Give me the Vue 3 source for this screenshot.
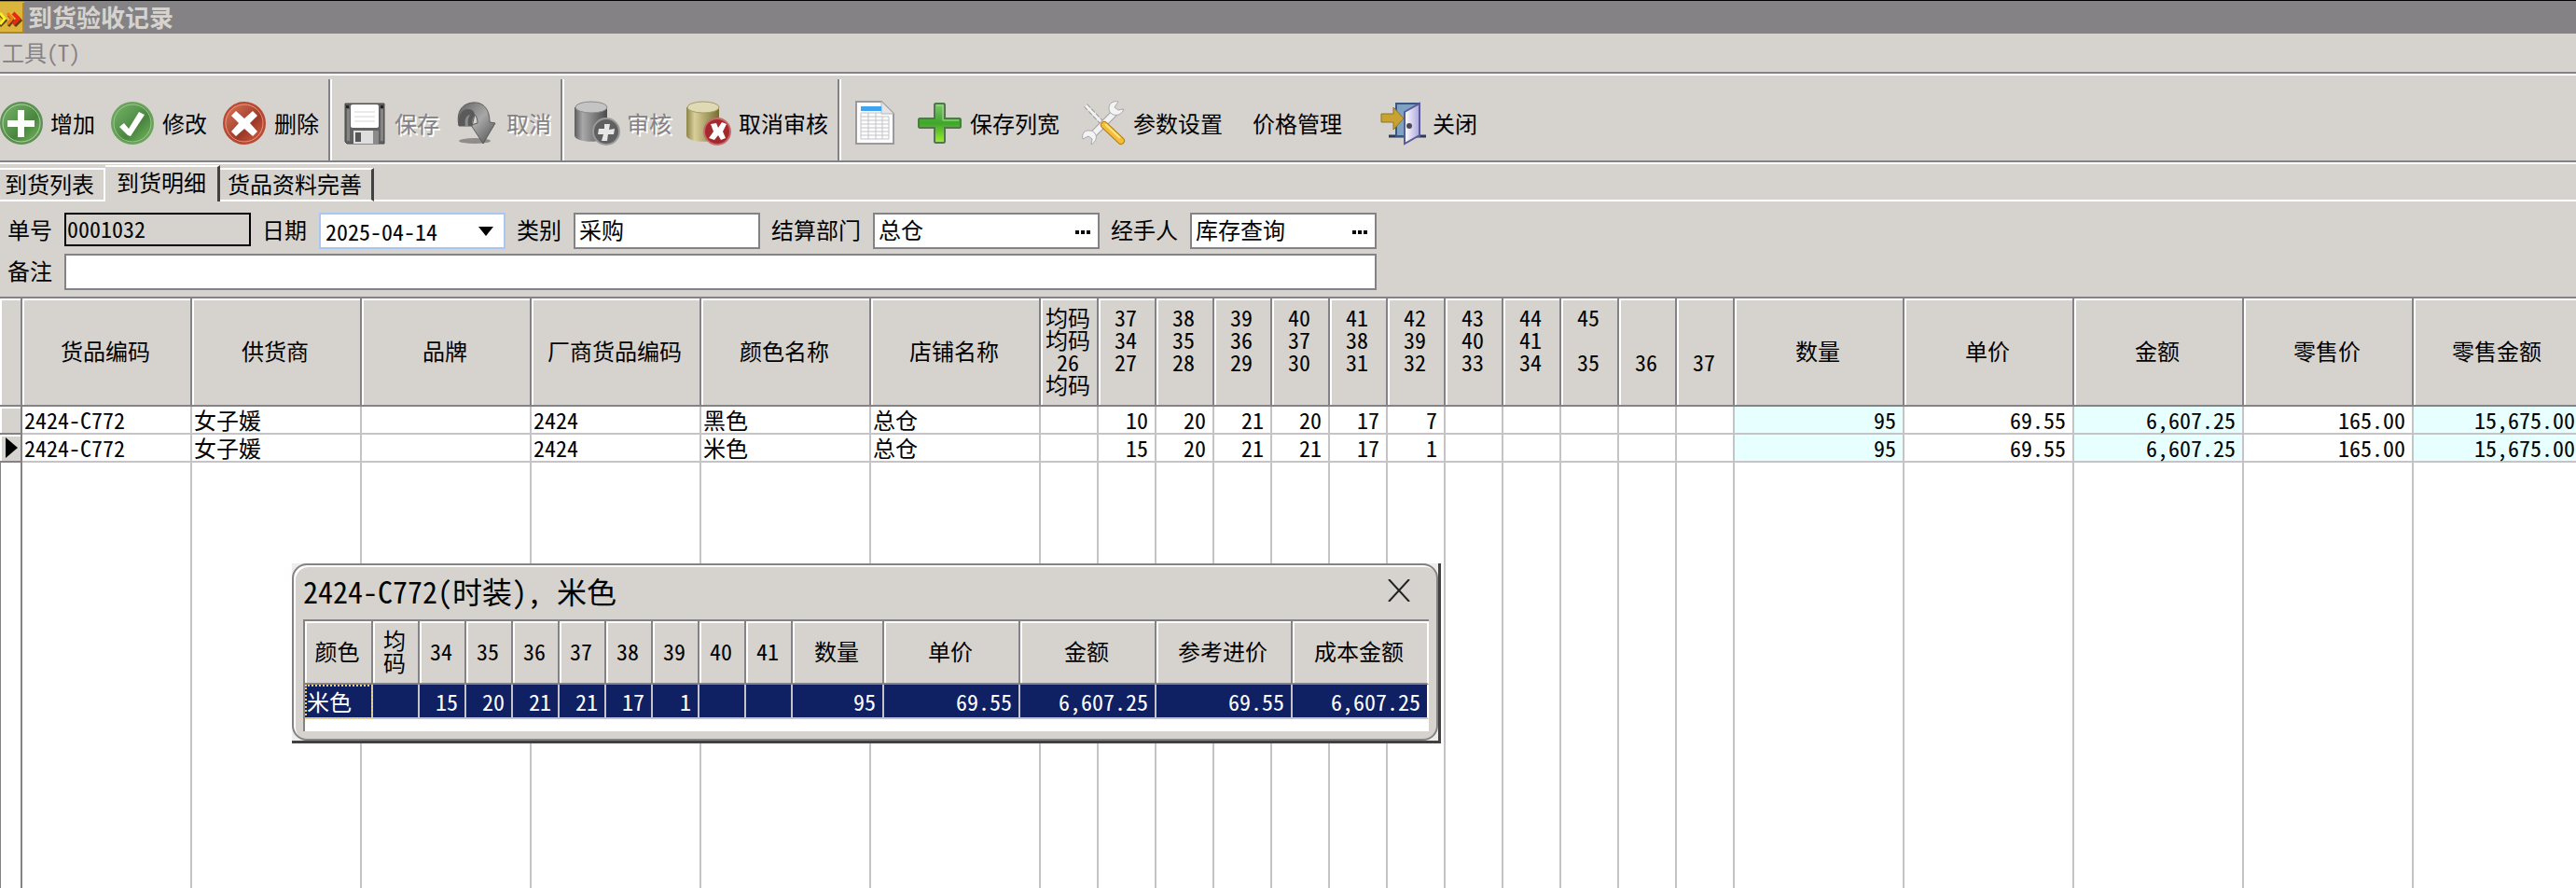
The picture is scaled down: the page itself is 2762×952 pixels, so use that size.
<script setup>
import { ref } from "vue";

const billNo = ref("0001032");
const billDate = ref("2025-04-14");
const category = ref("采购");
const department = ref("总仓");
const handler = ref("库存查询");
const remark = ref("");

const activeTab = ref("到货明细");
const tabs = ["到货列表", "到货明细", "货品资料完善"];

const showDetail = ref(true);
const currentRow = ref(1);

const textColumns = ["货品编码", "供货商", "品牌", "厂商货品编码", "颜色名称", "店铺名称"];

const sizeColumns = [
  ["均码", "均码", "26", "均码"],
  ["37", "34", "27", ""],
  ["38", "35", "28", ""],
  ["39", "36", "29", ""],
  ["40", "37", "30", ""],
  ["41", "38", "31", ""],
  ["42", "39", "32", ""],
  ["43", "40", "33", ""],
  ["44", "41", "34", ""],
  ["45", "", "35", ""],
  ["", "", "36", ""],
  ["", "", "37", ""],
];

const totalColumns = ["数量", "单价", "金额", "零售价", "零售金额"];
const tinted = ["数量", "金额", "零售金额"];

const rows = [
  {
    info: ["2424-C772", "女子媛", "", "2424", "黑色", "总仓"],
    sizes: ["", "10", "20", "21", "20", "17", "7", "", "", "", "", ""],
    totals: ["95", "69.55", "6,607.25", "165.00", "15,675.00"],
  },
  {
    info: ["2424-C772", "女子媛", "", "2424", "米色", "总仓"],
    sizes: ["", "15", "20", "21", "21", "17", "1", "", "", "", "", ""],
    totals: ["95", "69.55", "6,607.25", "165.00", "15,675.00"],
  },
];

const detailSizes = ["34", "35", "36", "37", "38", "39", "40", "41"];
const detailTotals = ["单价", "金额", "参考进价", "成本金额"];
const detailRow = ["", "15", "20", "21", "21", "17", "1", "", "", "95", "69.55", "6,607.25", "69.55", "6,607.25"];
</script>

<template>
  <div class="window">
    <svg class="defs" width="0" height="0" aria-hidden="true">
      <defs>
        <linearGradient id="green" x1="0" y1="0" x2="1" y2="1">
          <stop offset="0" stop-color="#79b86b" />
          <stop offset="0.6" stop-color="#4a8540" />
          <stop offset="1" stop-color="#7cc064" />
        </linearGradient>
        <linearGradient id="red" x1="0" y1="0" x2="1" y2="1">
          <stop offset="0" stop-color="#e07a5c" />
          <stop offset="0.6" stop-color="#9c3a28" />
          <stop offset="1" stop-color="#e0664a" />
        </linearGradient>
        <linearGradient id="steel" x1="0" y1="0" x2="1" y2="0">
          <stop offset="0" stop-color="#5c5c5c" />
          <stop offset="0.25" stop-color="#a9a9a9" />
          <stop offset="1" stop-color="#4a4a4a" />
        </linearGradient>
        <linearGradient id="brass" x1="0" y1="0" x2="1" y2="0">
          <stop offset="0" stop-color="#8c8348" />
          <stop offset="0.25" stop-color="#d8d09a" />
          <stop offset="1" stop-color="#756c30" />
        </linearGradient>
        <linearGradient id="lime" x1="0" y1="0" x2="0" y2="1">
          <stop offset="0" stop-color="#7cc86a" />
          <stop offset="0.5" stop-color="#3fa52c" />
          <stop offset="1" stop-color="#9cf02c" />
        </linearGradient>
        <linearGradient id="arrow" x1="0" y1="0" x2="1" y2="1">
          <stop offset="0" stop-color="#606060" />
          <stop offset="0.5" stop-color="#a8a8a8" />
          <stop offset="1" stop-color="#4c4c4c" />
        </linearGradient>
        <linearGradient id="door" x1="0" y1="0" x2="1" y2="0">
          <stop offset="0" stop-color="#ffffff" />
          <stop offset="1" stop-color="#a9a6dc" />
        </linearGradient>
      </defs>
    </svg>

    <header class="title-bar">
      <svg class="app-icon" viewBox="0 0 26 34" aria-hidden="true">
        <rect width="26" height="34" fill="#dcb53c" />
        <path d="M0 33h25V1" fill="none" stroke="#b3871c" stroke-width="2" />
        <path d="M0 14l6 6-6 6M9 14l5 6-5 6M16 14l6 6-6 6" fill="none" stroke="#5a400c" stroke-width="3" />
        <path d="M0 12l5 6-5 6" fill="none" stroke="#f8f020" stroke-width="3" />
        <path d="M8 12l5 6-5 6" fill="none" stroke="#f07818" stroke-width="3" />
        <path d="M14 12l6 6-6 6" fill="none" stroke="#e82810" stroke-width="4" />
      </svg>
      <h1>到货验收记录</h1>
    </header>

    <nav class="menu-bar">
      <button type="button" disabled>工具(T)</button>
    </nav>

    <div class="toolbar">
      <div class="tool-group first">
        <button type="button" class="tool">
          <svg viewBox="0 0 48 48" aria-hidden="true">
            <circle cx="25" cy="24" r="22" fill="url(#green)" stroke="#5f8f56" stroke-width="2" />
            <circle cx="25" cy="24" r="20" fill="none" stroke="#a8d49c" stroke-width="1" />
            <path d="M21 10h7v11h11v7H28v11h-7V28H10v-7h11z" fill="#fff" />
          </svg>
          <span>增加</span>
        </button>
        <button type="button" class="tool">
          <svg viewBox="0 0 48 48" aria-hidden="true">
            <circle cx="24" cy="24" r="22" fill="url(#green)" stroke="#6aa35c" stroke-width="2" />
            <circle cx="24" cy="24" r="20" fill="none" stroke="#98c98c" stroke-width="1" />
            <path d="M10 28l5-4 5 6 11-18 6 3-15 23-3-1z" fill="#fff" />
          </svg>
          <span>修改</span>
        </button>
        <button type="button" class="tool">
          <svg viewBox="0 0 48 48" aria-hidden="true">
            <circle cx="24" cy="24" r="22" fill="url(#red)" stroke="#b84a34" stroke-width="2" />
            <circle cx="24" cy="24" r="20" fill="none" stroke="#e8937c" stroke-width="1" />
            <path d="M15 11l9 8 9-8 5 5-8 8 8 9-5 5-9-8-9 8-5-5 8-9-8-8z" fill="#fff" />
          </svg>
          <span>删除</span>
        </button>
      </div>
      <div class="separator"></div>
      <div class="tool-group">
        <button type="button" class="tool" disabled>
          <svg viewBox="0 0 48 48" aria-hidden="true">
            <path d="M3 3h42v43H5l-2-2z" fill="#626262" stroke="#474747" stroke-width="1" />
            <path d="M5 9h3v34H5zM41 9h3v34h-3z" fill="#868686" />
            <rect x="9" y="4" width="30" height="25" rx="2" fill="#fff" />
            <path d="M13 12h22M13 17h22M13 22h22" stroke="#d5d5d5" stroke-width="1" />
            <rect x="12" y="32" width="21" height="14" fill="#dedede" />
            <rect x="14" y="34" width="6" height="10" fill="#565656" />
            <path d="M33 32h6v14h-6z" fill="#8a8a8a" />
            <rect x="4" y="5" width="3" height="3" fill="#222" />
            <rect x="41" y="5" width="3" height="3" fill="#222" />
          </svg>
          <span>保存</span>
        </button>
        <button type="button" class="tool" disabled>
          <svg viewBox="0 0 48 48" aria-hidden="true">
            <ellipse cx="22" cy="43" rx="17" ry="3" fill="#8f8d8a" />
            <path d="M5 27C2 12 8 3 20 2c12-1 18 8 18 21l6 1-13 22-13-20 7-2c0-4-1-7-3-9l-3 12z" fill="url(#arrow)" stroke="#5a5a5a" stroke-width="1" />
            <path d="M5 27C3 16 8 9 15 9c5 0 7 3 7 7-2 1-3 5-3 11z" fill="#5a5a5a" />
            <path d="M12 27c-1-6 0-11 5-12-2 3-3 7-2 12z" fill="#8c8c8c" />
          </svg>
          <span>取消</span>
        </button>
      </div>
      <div class="separator"></div>
      <div class="tool-group">
        <button type="button" class="tool" disabled>
          <svg viewBox="0 0 48 48" aria-hidden="true">
            <path d="M0 7v30c0 9 35 9 35 0V7z" fill="url(#steel)" />
            <ellipse cx="18" cy="7" rx="17" ry="6" fill="#c4c4c4" stroke="#8a8a8a" stroke-width="1" />
            <circle cx="34" cy="33" r="14" fill="#606060" stroke="#9a9a9a" stroke-width="2" />
            <path d="M32 25h6l-1 6 6-1-1 6h-6l-1 7h-6l2-7h-6l1-6h6z" fill="#e6e6e6" />
          </svg>
          <span>审核</span>
        </button>
        <button type="button" class="tool">
          <svg viewBox="0 0 48 48" aria-hidden="true">
            <path d="M0 7v30c0 9 35 9 35 0V7z" fill="url(#brass)" />
            <ellipse cx="18" cy="7" rx="17" ry="6" fill="#e0dab4" stroke="#a59c62" stroke-width="1" />
            <circle cx="33" cy="33" r="14" fill="#a5282c" stroke="#c46a6c" stroke-width="2" />
            <path d="M26 25l6-1 2 5 4-6 5 2-4 8 3 7-5 2-3-5-4 5-6-2 5-7z" fill="#fff" />
          </svg>
          <span>取消审核</span>
        </button>
      </div>
      <div class="separator"></div>
      <div class="tool-group wide">
        <button type="button" class="tool" aria-label="列表">
          <svg viewBox="0 0 48 48" aria-hidden="true">
            <path d="M5 1h27l13 13v32H5z" fill="#fdfdfd" stroke="#9a9a9c" stroke-width="2" />
            <path d="M32 1v13h13" fill="#e4e4e6" stroke="#b4b4b6" stroke-width="1" />
            <rect x="10" y="6" width="22" height="5" fill="#3fa4ee" />
            <path d="M10 13h22M10 17h30M10 21h30M10 25h30M10 29h30M10 33h30M10 37h30M10 41h30M10 13v28M18 13v28M26 13v28M33 17v24M40 17v24" fill="none" stroke="#c3c3c8" stroke-width="1" />
          </svg>
        </button>
        <button type="button" class="tool">
          <svg viewBox="0 0 48 48" aria-hidden="true">
            <path d="M19 3h9l1 1v15h16l1 1v8l-1 1H29v15l-1 1h-9l-1-1V29H2l-1-1v-8l1-1h16V4z" fill="url(#lime)" stroke="#4f7a48" stroke-width="2" />
            <path d="M20 5h7v16h17" fill="none" stroke="#a8dd98" stroke-width="1" />
          </svg>
          <span>保存列宽</span>
        </button>
        <button type="button" class="tool">
          <svg viewBox="0 0 48 48" aria-hidden="true">
            <path d="M5 5l18 19" stroke="#9a9a9a" stroke-width="5" stroke-dasharray="5 2" />
            <path d="M5 5l18 19" stroke="#f3f3f3" stroke-width="3" />
            <path d="M12 37L37 12" stroke="#a2a2a4" stroke-width="8" />
            <path d="M12 37L37 12" stroke="#f2f2f2" stroke-width="6" />
            <path d="M33 2c-4 3-4 9 0 12 4 3 11 1 13-5l-6 1-4-3 4-6c-2-1-5 0-7 1zM3 34c3-3 9-3 12 1 3 4 1 9-4 12l1-6-4-3-6 3c-1-3 0-5 1-7z" fill="#f4f4f4" stroke="#a8a8ac" stroke-width="1" />
            <path d="M25 26l18 17" stroke="#b27a14" stroke-width="8" stroke-linecap="round" />
            <path d="M25 26l18 17" stroke="#f5bd34" stroke-width="6" stroke-linecap="round" />
            <path d="M26 25l16 15" stroke="#fce58c" stroke-width="2" />
          </svg>
          <span>参数设置</span>
        </button>
        <button type="button" class="tool text-only"><span>价格管理</span></button>
        <button type="button" class="tool">
          <svg viewBox="0 0 48 48" aria-hidden="true">
            <path d="M9 38h40" stroke="#2c3a56" stroke-width="3" />
            <path d="M17 3h25v35H17z" fill="#7ea2c4" stroke="#3c5684" stroke-width="2" />
            <path d="M26 12l16-9v34l-16 9z" fill="url(#door)" stroke="#5b5a94" stroke-width="2" />
            <circle cx="31" cy="27" r="3" fill="#4a4a50" />
            <path d="M1 14h13V7l11 12-11 12v-8H1z" fill="#c9a332" stroke="#8f7424" stroke-width="1" />
          </svg>
          <span>关闭</span>
        </button>
      </div>
    </div>

    <div class="tabs" role="tablist">
      <button
        v-for="tab in tabs"
        :key="tab"
        type="button"
        role="tab"
        class="tab"
        :class="{ active: tab === activeTab }"
        :aria-selected="tab === activeTab"
        @click="activeTab = tab"
      >
        {{ tab }}
      </button>
      <div class="tab-rest"></div>
    </div>

    <form class="bill-form" @submit.prevent>
      <div class="form-row">
        <label for="bill-no">单号</label>
        <input id="bill-no" v-model="billNo" class="box locked" readonly />
        <label for="bill-date">日期</label>
        <div class="box date">
          <input id="bill-date" v-model="billDate" />
          <button type="button" aria-label="选择日期">
            <svg width="16" height="10" viewBox="0 0 16 10" aria-hidden="true"><path d="M0 0h16L8 10z" /></svg>
          </button>
        </div>
        <label for="category">类别</label>
        <input id="category" v-model="category" class="box" />
        <label for="department">结算部门</label>
        <div class="box department">
          <input id="department" v-model="department" />
          <button type="button" aria-label="选择部门">
            <svg width="16" height="4" viewBox="0 0 16 4" aria-hidden="true"><path d="M0 0h4v4H0zM6 0h4v4H6zM12 0h4v4h-4z" /></svg>
          </button>
        </div>
        <label for="handler">经手人</label>
        <div class="box">
          <input id="handler" v-model="handler" />
          <button type="button" aria-label="选择经手人">
            <svg width="16" height="4" viewBox="0 0 16 4" aria-hidden="true"><path d="M0 0h4v4H0zM6 0h4v4H6zM12 0h4v4h-4z" /></svg>
          </button>
        </div>
      </div>
      <div class="form-row">
        <label for="remark">备注</label>
        <input id="remark" v-model="remark" class="box remark" />
      </div>
    </form>

    <main class="grid-area">
      <table class="grid">
        <colgroup>
          <col class="col-mark" />
          <col v-for="name in textColumns" :key="name" class="col-wide" />
          <col v-for="(size, i) in sizeColumns" :key="i" class="col-size" />
          <col v-for="name in totalColumns" :key="name" class="col-wide" />
        </colgroup>
        <thead>
          <tr>
            <th></th>
            <th v-for="name in textColumns" :key="name">{{ name }}</th>
            <th v-for="(size, i) in sizeColumns" :key="i">
              <div v-for="(line, n) in size" :key="n" class="size-line">{{ line }}</div>
            </th>
            <th v-for="name in totalColumns" :key="name">{{ name }}</th>
          </tr>
        </thead>
        <tbody>
          <tr v-for="(row, r) in rows" :key="r" class="data-row" @click="currentRow = r">
            <td class="mark">
              <svg v-if="r === currentRow" width="13" height="22" viewBox="0 0 13 22" aria-hidden="true">
                <path d="M0 0l13 11L0 22z" />
              </svg>
            </td>
            <td v-for="(value, i) in row.info" :key="'i' + i">{{ value }}</td>
            <td v-for="(value, i) in row.sizes" :key="'s' + i" class="num">{{ value }}</td>
            <td
              v-for="(value, i) in row.totals"
              :key="'t' + i"
              class="num"
              :class="{ tint: tinted.includes(totalColumns[i]) }"
            >
              {{ value }}
            </td>
          </tr>
          <tr class="filler">
            <td class="edge"></td>
            <td v-for="n in 23" :key="n"></td>
          </tr>
        </tbody>
      </table>
    </main>

    <section v-if="showDetail" class="dialog" role="dialog" aria-labelledby="detail-title">
      <div class="dialog-body">
        <div class="dialog-head">
          <h2 id="detail-title">2424-C772(时装), 米色</h2>
          <button type="button" aria-label="关闭" @click="showDetail = false">
            <svg width="24" height="24" viewBox="0 0 24 24" aria-hidden="true">
              <path d="M1 0l22 24M23 0L1 24" fill="none" stroke="#222" stroke-width="2" />
            </svg>
          </button>
        </div>
        <div class="detail-box">
          <table class="detail">
            <colgroup>
              <col class="col-color" />
              <col v-for="n in 9" :key="n" class="col-small" />
              <col class="col-qty" />
              <col v-for="name in detailTotals" :key="name" class="col-total" />
            </colgroup>
            <thead>
              <tr>
                <th>颜色</th>
                <th>均<br />码</th>
                <th v-for="size in detailSizes" :key="size">{{ size }}</th>
                <th>数量</th>
                <th v-for="name in detailTotals" :key="name">{{ name }}</th>
              </tr>
            </thead>
            <tbody>
              <tr>
                <td class="focused">米色</td>
                <td v-for="(value, i) in detailRow" :key="i" class="num">{{ value }}</td>
              </tr>
            </tbody>
          </table>
        </div>
      </div>
    </section>
  </div>
</template>

<style>
body {
  margin: 0;
  overflow: hidden;
}
</style>

<style scoped>
.window {
  position: relative;
  display: flex;
  flex-direction: column;
  height: 100vh;
  overflow: hidden;
  box-sizing: border-box;
  border-top: 1px solid #000;
  background: #d6d3ce;
  color: #000;
  font-family: "Noto Sans Mono CJK SC", "Noto Sans CJK SC", monospace;
  font-size: 24px;
  line-height: 24px;
}

.defs {
  position: absolute;
}

button,
input {
  margin: 0;
  padding: 0;
  border: none;
  background: none;
  color: inherit;
  font: inherit;
}

.title-bar {
  display: flex;
  align-items: center;
  gap: 4px;
  height: 35px;
  background: #848284;
  color: #d6d3ce;
}

.app-icon {
  width: 26px;
  height: 34px;
}

h1 {
  margin: 0;
  padding-bottom: 2px;
  font-size: 26px;
  font-weight: bold;
}

.menu-bar {
  display: flex;
  align-items: center;
  height: 39px;
  padding: 0 0 2px 2px;
}

.menu-bar button {
  color: #848284;
}

.toolbar {
  display: flex;
  align-items: stretch;
  height: 89px;
  border-top: 2px solid #848284;
  border-bottom: 2px solid #848284;
  box-shadow: inset 0 2px #fff, 0 2px #fff;
  padding-top: 4px;
}

.tool-group {
  display: flex;
  align-items: center;
  gap: 16px;
  padding-top: 8px;
}

.tool-group.first {
  margin-left: -2px;
}

.tool-group.wide {
  gap: 23px;
}

.tool {
  display: flex;
  align-items: center;
  gap: 8px;
  white-space: nowrap;
}

.tool svg {
  width: 48px;
  height: 48px;
  overflow: visible;
}

.tool:disabled {
  color: #848284;
  text-shadow: 2px 2px #fff;
}

.text-only {
  padding: 0 18px 0 9px;
}

.separator {
  width: 2px;
  margin: 2px 11px 0 10px;
  border-left: 2px solid #848284;
  background: #fff;
}

.tabs {
  display: flex;
  align-items: flex-end;
  height: 40px;
  padding-top: 2px;
}

.tab {
  height: 36px;
  padding: 0 10px 2px 5px;
  border-top: 2px solid #fff;
  border-right: 2px solid #fff;
  border-bottom: 2px solid #fff;
  white-space: nowrap;
}

.tab.active {
  height: 39px;
  padding: 0 12px 6px;
  border-right: 3px solid #424142;
  border-bottom: none;
}

.tab:nth-child(3) {
  padding: 0 10px 2px 8px;
  border-right: 3px solid #424142;
}

.tab-rest {
  flex: 1;
  border-bottom: 2px solid #fff;
}

.bill-form {
  display: flex;
  flex-direction: column;
  gap: 5px;
  width: max-content;
  padding: 12px 8px 7px;
}

.form-row {
  display: flex;
  align-items: flex-start;
}

label {
  padding: 6px 13px 6px 0;
  white-space: nowrap;
}

.box + label {
  padding-left: 12px;
}

.box {
  display: flex;
  align-items: center;
  box-sizing: border-box;
  width: 200px;
  height: 39px;
  padding: 0 8px 4px 4px;
  border: 2px solid #848284;
  background: #fff;
}

.box input {
  flex: 1;
  min-width: 0;
}

.box button {
  display: flex;
  align-items: center;
  height: 100%;
  padding-top: 6px;
}

.box.locked {
  height: 36px;
  padding-left: 1px;
  border-color: #000;
  background: #d6d3ce;
}

.box.date {
  padding: 0 11px 0 5px;
  border-color: #a9c7f0;
}

.box.date button {
  padding-top: 0;
}

.box.department {
  width: 243px;
}

.box.remark {
  flex: 1;
}

.grid-area {
  flex: 1;
  min-height: 0;
  overflow: hidden;
  background: #fff;
  border-top: 2px solid #848284;
}

table {
  table-layout: fixed;
  border-collapse: separate;
  border-spacing: 0;
}

.grid {
  width: 2770px;
  height: 100%;
}

.col-mark {
  width: 24px;
}

.col-wide {
  width: 182px;
}

.col-size {
  width: 62px;
}

th {
  box-sizing: border-box;
  height: 116px;
  padding: 0 2px 2px 0;
  border-right: 2px solid #848284;
  border-bottom: 2px solid #848284;
  background: #d6d3ce;
  box-shadow: inset 2px 2px #fff;
  font-weight: normal;
  text-align: center;
  white-space: nowrap;
}

.size-line {
  height: 24px;
}

td {
  box-sizing: border-box;
  padding: 0 2px;
  border-right: 2px solid #c6c3c6;
  border-bottom: 2px solid #c6c3c6;
  white-space: nowrap;
}

.data-row td {
  height: 30px;
}

.num {
  padding: 0 7px;
  text-align: right;
}

.tint {
  background: #e7ffff;
}

.mark {
  padding-left: 6px;
  border-color: #848284;
  background: #d6d3ce;
  box-shadow: inset 2px 2px #fff;
}

.mark svg {
  display: block;
}

.filler td {
  border-bottom: none;
}

.filler .edge {
  border-left: 1px solid #848284;
  border-right-color: #848284;
}

.dialog {
  position: absolute;
  top: 603px;
  left: 313px;
  border-right: 3px solid #424142;
  border-bottom: 3px solid #424142;
  background: #efedea;
}

.dialog-body {
  padding: 0 8px 8px 10px;
  border: 2px solid #848284;
  border-radius: 16px;
  background: #d6d3ce;
  box-shadow: inset 2px 2px #fff;
}

.dialog-head {
  display: flex;
  align-items: center;
  justify-content: space-between;
  box-sizing: border-box;
  height: 58px;
  padding: 0 20px 4px 0;
}

h2 {
  margin: 0;
  font-size: 32px;
  line-height: 32px;
  font-weight: normal;
}

.dialog-head button {
  display: flex;
}

.detail-box {
  padding-bottom: 13px;
  border-top: 2px solid #848284;
  border-left: 2px solid #848284;
  background: #fff;
}

.detail {
  width: 1205px;
}

.detail th {
  height: 68px;
}

.detail th:last-child,
.detail td:last-child {
  border-right-color: #fff;
}

.col-color {
  width: 73px;
}

.col-small {
  width: 50px;
}

.col-qty {
  width: 98px;
}

.col-total {
  width: 146px;
}

.detail td {
  height: 37px;
  background: #0f2063;
  color: #fff;
}

.detail .focused {
  outline: 2px dotted #f0d070;
  outline-offset: -2px;
}
</style>
